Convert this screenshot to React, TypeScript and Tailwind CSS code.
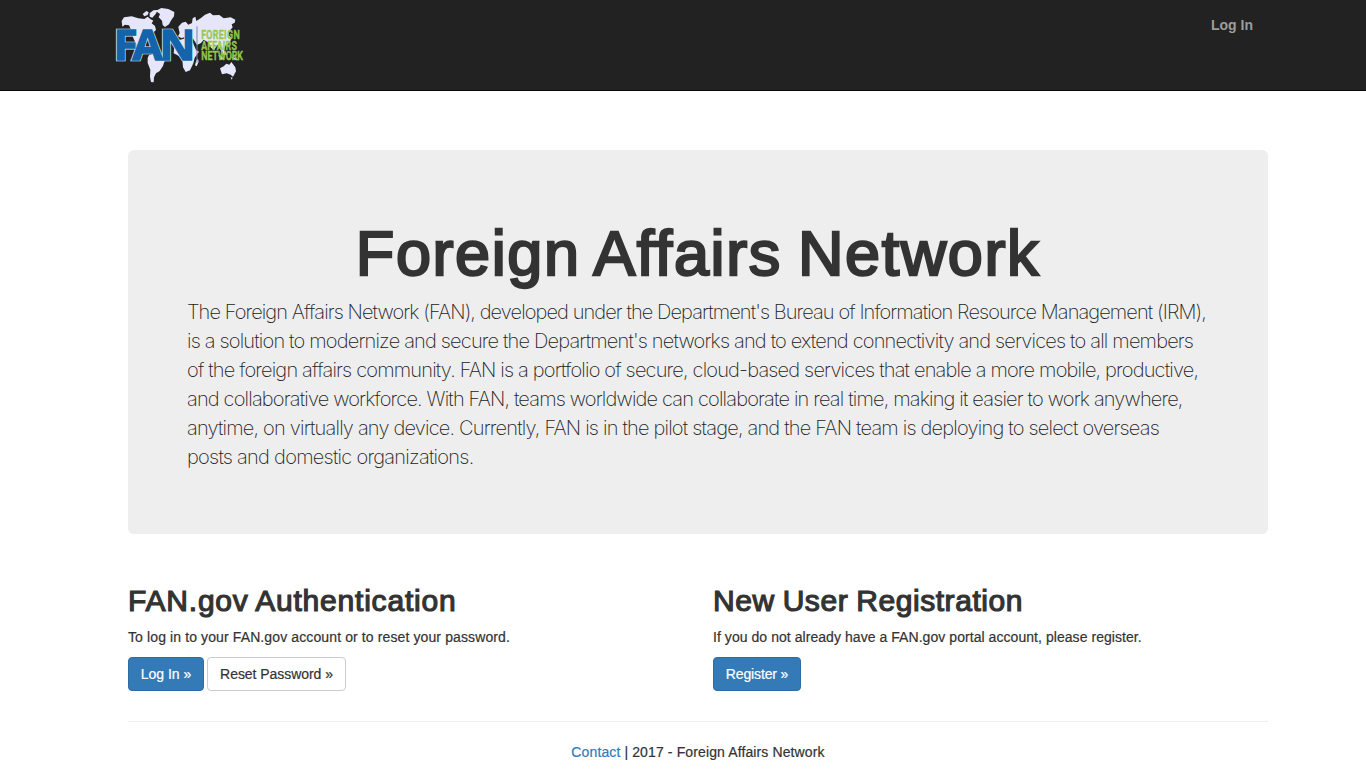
const lead = [
  { text: "The Foreign Affairs Network (FAN), developed under the Department's Bureau of Information Resource Management (IRM),", cls: 'block tracking-[-0.91px]' },
  { text: "is a solution to modernize and secure the Department's networks and to extend connectivity and services to all members", cls: 'block tracking-[-0.82px]' },
  { text: 'of the foreign affairs community. FAN is a portfolio of secure, cloud-based services that enable a more mobile, productive,', cls: 'block tracking-[-0.82px]' },
  { text: 'and collaborative workforce. With FAN, teams worldwide can collaborate in real time, making it easier to work anywhere,', cls: 'block tracking-[-0.83px]' },
  { text: 'anytime, on virtually any device. Currently, FAN is in the pilot stage, and the FAN team is deploying to select overseas', cls: 'block tracking-[-0.8px]' },
  { text: 'posts and domestic organizations.', cls: 'block tracking-[-0.74px]' },
];

function Logo() {
  return (
    <svg className="ml-[105px] block h-[90px] w-[150px]" viewBox="0 0 450 270" role="img" aria-label="FAN">
      <g fill="#e6e6fa">
        <path d="M50 63 L57 52 L80 49 L100 55 L118 57 L128 50 L137 58 L145 62 L140 70 L150 78 L153 90 L142 100 L132 108 L126 124 L118 122 L105 124 L102 136 L112 143 L122 150 L132 156 L120 154 L103 146 L92 130 L84 112 L80 94 L72 76 L60 74 L52 80 Z" />
        <path d="M113 42 L124 33 L131 37 L128 45 L118 49 Z M134 40 L145 31 L158 30 L152 42 L142 53 L134 50 Z" />
        <path d="M152 33 L169 24 L190 27 L208 36 L207 49 L199 60 L192 73 L180 81 L173 75 L171 62 L161 52 L165 42 Z" />
        <path d="M132 165 L145 162 L158 171 L179 182 L174 198 L164 213 L153 220 L147 232 L146 247 L138 246 L135 230 L136 209 L128 189 L128 174 Z" />
        <path d="M222 91 L220 80 L231 68 L242 65 L250 74 L261 69 L263 55 L271 50 L274 63 L288 54 L300 44 L315 38 L324 46 L343 45 L356 55 L377 52 L391 59 L389 68 L380 73 L383 82 L374 92 L370 105 L380 114 L374 128 L361 137 L357 150 L367 164 L356 165 L345 146 L337 134 L327 151 L318 143 L309 127 L296 119 L288 129 L276 135 L263 114 L246 107 L230 115 L219 109 L224 99 Z" />
        <path d="M222 120 L244 115 L263 126 L273 150 L282 155 L269 173 L265 190 L255 211 L242 216 L234 202 L232 178 L222 168 L206 160 L208 139 Z" />
        <path d="M274 181 L279 176 L281 185 L275 199 L270 196 Z M345 205 L356 199 L364 191 L373 194 L379 186 L391 202 L393 214 L384 230 L377 224 L365 220 L351 223 Z M377 232 L383 233 L380 239 Z M340 165 L350 169 L356 178 L349 179 Z M377 170 L391 174 L402 181 L390 180 Z" />
      </g>
      <g transform="scale(1.06 1)" fontFamily="Open Sans, Liberation Sans, sans-serif" fontWeight="700" fontSize="125" fill="#1464ac">
        <text x="24 77 154" y="180" stroke="#dcebf8" strokeWidth="8" paintOrder="stroke">FAN</text>
        <text x="24 77 154" y="180" stroke="#1464ac" strokeWidth="4" aria-hidden="true">FAN</text>
      </g>
      <path d="M276 79 V188" stroke="#7186b5" strokeWidth="3" />
      <g transform="scale(0.66 1)" fontFamily="Roboto, Liberation Sans, sans-serif" fontWeight="500" fontSize="40" fill="#92c849" stroke="#92c849" strokeWidth="1.8">
        <text x="437" y="117" textLength="175">FOREIGN</text>
        <text x="437" y="149" textLength="162">AFFAIRS</text>
        <text x="437" y="180" textLength="190">NETWORK</text>
      </g>
    </svg>
  );
}

export default function App() {
  return (
    <div className="flex h-[782px] flex-col overflow-hidden bg-white font-['Liberation_Sans',Arial,sans-serif] text-[14px] leading-[20px] text-[#333]">
      <nav className="flex h-[91px] shrink-0 items-start justify-between border-b border-[#080808] bg-[#222]">
        <Logo />
        <a className="mr-[113px] mt-[15px] font-bold text-[#9d9d9d]">Log In</a>
      </nav>
      <main className="ml-[128px] mt-[59px] w-[1140px]">
        <section className="h-[384px] rounded-[6px] bg-[#eee] px-[60px] pt-[69px]">
          <h1 className="text-center text-[63px] leading-[69px] tracking-[1.6px] [word-spacing:-3px] [-webkit-text-stroke:2.4px_#333]">Foreign Affairs Network</h1>
          <p className="-ml-px mt-[10px] whitespace-nowrap font-['Inter','Liberation_Sans',sans-serif] text-[20px] font-extralight leading-[29px] text-[#222]">
            {lead.map((l) => <span key={l.text} className={l.cls}>{l.text}</span>)}
          </p>
        </section>
        <div className="grid grid-cols-2 gap-[30px] pt-[50px] [-webkit-text-stroke:0.2px_currentColor]">
          <section>
            <h2 className="text-[30px] leading-[33px] tracking-[0.8px] [word-spacing:-1px] [-webkit-text-stroke:1.2px_#333]">FAN.gov Authentication</h2>
            <p className="mt-[10px] tracking-[0.115px]">To log in to your FAN.gov account or to reset your password.</p>
            <div className="mt-[10px] flex gap-[3px]">
              <button className="h-[34px] w-[76px] rounded-[4px] border border-[#2e6da4] bg-[#337ab7] text-white [-webkit-text-stroke:0.2px_#fff]">Log In »</button>
              <button className="h-[34px] w-[139px] rounded-[4px] border border-[#ccc] bg-white tracking-[-0.05px]">Reset Password »</button>
            </div>
          </section>
          <section>
            <h2 className="text-[30px] leading-[33px] tracking-[0.57px] [word-spacing:-1px] [-webkit-text-stroke:1.2px_#333]">New User Registration</h2>
            <p className="mt-[10px] tracking-[0.055px]">If you do not already have a FAN.gov portal account, please register.</p>
            <button className="mt-[10px] h-[34px] w-[88px] rounded-[4px] border border-[#2e6da4] bg-[#337ab7] tracking-[-0.15px] text-white [-webkit-text-stroke:0.2px_#fff]">Register »</button>
          </section>
        </div>
        <hr className="mt-[30px] border-[#eee]" />
        <footer className="mt-[20px] text-center tracking-[0.12px] [-webkit-text-stroke:0.2px_currentColor]">
          <a className="text-[#337ab7] [-webkit-text-stroke:0.2px_#337ab7]">Contact</a> | 2017 - Foreign Affairs Network
        </footer>
      </main>
    </div>
  );
}
